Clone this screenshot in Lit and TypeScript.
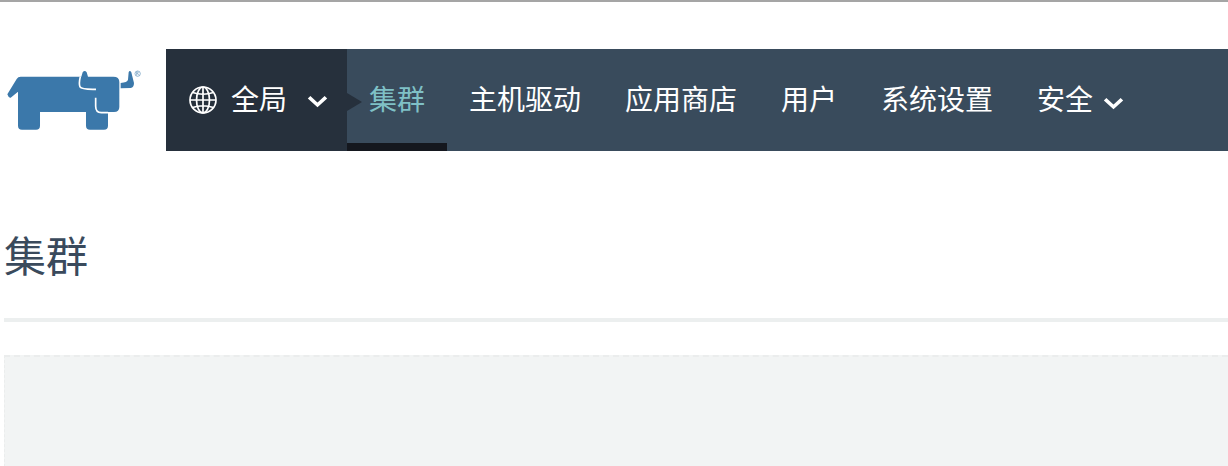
import { LitElement, html, css, svg } from "lit";
import { customElement } from "lit/decorators.js";

const chevron = svg`<path d="M1.5 1.8 L7.5 7.6 L13.5 1.8" fill="none" stroke="#fff" stroke-width="2.6"/>`;

@customElement("app-root")
export class AppRoot extends LitElement {
  static styles = css`
    :host {
      display: block;
      width: 1228px;
      height: 466px;
      overflow: hidden;
      background: #fff;
      font-family: "Liberation Sans", "Noto Sans CJK SC", sans-serif;
    }
    .topline { height: 2px; background: #a5a5a5; }
    header {
      display: flex;
      height: 102px;
      margin-top: 47px;
    }
    .logo {
      width: 166px;
      flex: none;
      display: flex;
      align-items: center;
    }
    .logo svg { display: block; }
    .scope {
      width: 181px;
      flex: none;
      background: #26303c;
      color: #fff;
      display: flex;
      align-items: center;
      padding-left: 23px;
      box-sizing: border-box;
      font-size: 28px;
      position: relative;
      z-index: 1;
    }
    .scope .label { margin-left: 14px; line-height: 102px; padding-top: 2px; }
    .scope .chev { margin-left: 20px; margin-top: 2px; }
    .scope::after {
      content: "";
      position: absolute;
      right: -15px;
      top: 44px;
      border-left: 15px solid #26303c;
      border-top: 9px solid transparent;
      border-bottom: 9px solid transparent;
    }
    nav {
      flex: 1;
      background: #394b5c;
      display: flex;
      padding-left: 22px;
      gap: 44px;
      position: relative;
    }
    nav a {
      color: #fff;
      font-size: 28px;
      line-height: 102px;
      height: 102px;
      padding-top: 1px;
      box-sizing: border-box;
      display: flex;
      align-items: center;
      white-space: nowrap;
    }
    nav a.active { color: #7fc0c6; }
    nav a .chev { margin-left: 10px; margin-top: 5px; }
    .underline {
      position: absolute;
      left: 0;
      bottom: 0;
      width: 100px;
      height: 8px;
      background: #14171e;
    }
    .title {
      margin: 0 0 0 4px;
      padding-top: 79px;
      font-weight: 400;
      font-size: 42px;
      line-height: 56px;
      height: 56px;
      color: #3a4a5c;
    }
    hr {
      border: 0;
      height: 4px;
      background: #ecefef;
      margin: 32px 0 0 4px;
    }
    .well {
      margin: 33px 0 0 4px;
      height: 112px;
      box-sizing: border-box;
      background: #f2f4f4;
      border-top: 2px dashed #ebeded;
      border-left: 1px dashed #ebeded;
    }
  `;

  render() {
    return html`
      <div class="topline"></div>
      <header>
        <div class="logo">
          <svg width="142" height="66.67" viewBox="0 50 426 200">
            <path fill="#3b78aa" d="M22 132 L50 86 Q54 79 62 79 L244 79 L248 66 Q254 58 260 66 L264 79 L340 79 Q358 79 358 95 L358 170 Q358 185 342 185 L324 185 L324 226 Q324 238 312 238 L270 238 Q258 238 258 226 L258 185 L120 185 L120 226 Q120 238 108 238 L66 238 Q54 238 54 226 L54 124 L32 142 Q26 144 22 132 Z"/>
            <path fill="#3b78aa" d="M362 114 L392 113 Q402 111 402 98 L394 66 Q389 58 386 66 L384 88 Q382 96 362 98 Z"/>
            <path fill="none" stroke="#fff" stroke-width="5" d="M241 79 Q236 100 240 110 Q244 118 288 117"/>
            <path fill="none" stroke="#fff" stroke-width="5" d="M287 142 L287 168 Q287 187 304 187 L324 187"/>
            <circle cx="413" cy="70" r="8" fill="none" stroke="#3b78aa" stroke-width="1.6"/>
            <path d="M410 75 V65 H414 Q417 68 413 70 L417 75 M410 70 H413" fill="none" stroke="#3b78aa" stroke-width="1.4"/>
          </svg>
        </div>
        <div class="scope">
          <svg width="28" height="28" viewBox="0 0 28 28" fill="none" stroke="#fff" stroke-width="1.7">
            <circle cx="14" cy="14" r="13"/>
            <ellipse cx="14" cy="14" rx="6.5" ry="13"/>
            <path d="M14 1 V27 M1 14 H27 M3.5 6.5 Q14 10 24.5 6.5 M3.5 21.5 Q14 18 24.5 21.5"/>
          </svg>
          <span class="label">全局</span>
          <svg class="chev" width="21" height="13" viewBox="0 0 15 10" preserveAspectRatio="none">${chevron}</svg>
        </div>
        <nav>
          <a class="active">集群</a>
          <a>主机驱动</a>
          <a>应用商店</a>
          <a>用户</a>
          <a>系统设置</a>
          <a>安全<svg class="chev" width="21" height="13" viewBox="0 0 15 10" preserveAspectRatio="none">${chevron}</svg></a>
          <div class="underline"></div>
        </nav>
      </header>
      <h1 class="title">集群</h1>
      <hr />
      <div class="well"></div>
    `;
  }
}
